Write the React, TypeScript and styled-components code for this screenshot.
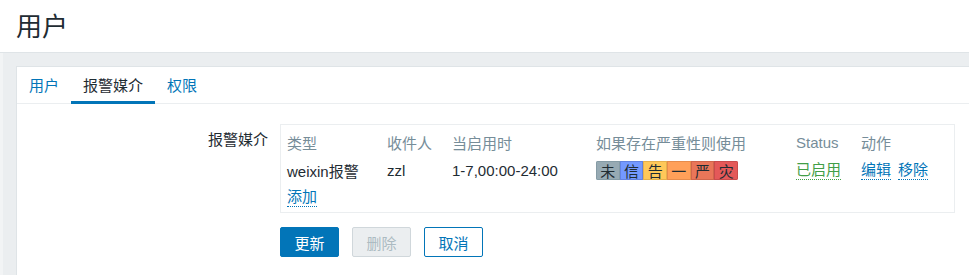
import React from "react";
import styled, { createGlobalStyle } from "styled-components";

const GlobalStyle = createGlobalStyle`
  html, body {
    margin: 0;
    padding: 0;
    background: #ebeef0;
    font-family: "Liberation Sans", Arial, "Noto Sans CJK SC", sans-serif;
    color: #1f2c33;
  }
`;

const Header = styled.header`
  height: 53px;
  background: #fff;
  border-bottom: 1px solid #dfe4e7;
  display: flex;
  align-items: center;
  padding: 0 16px;
  box-sizing: border-box;
`;

const Title = styled.h1`
  margin: 0;
  font-size: 26px;
  font-weight: normal;
  color: #1f2c33;
  line-height: 1;
  padding-top: 1px;
`;

const Wrap = styled.div`
  padding: 13px 0 0 13px;
  border-left: 3px solid #f2f4f5;
`;

const Panel = styled.section`
  background: #fff;
  border-top: 1px solid #dfe4e7;
  border-left: 1px solid #dfe4e7;
  min-height: 220px;
`;

const TabBar = styled.ul`
  display: flex;
  margin: 0;
  padding: 0;
  list-style: none;
  border-bottom: 1px solid #ebeef0;
`;

const Tab = styled.li<{ $active?: boolean }>`
  padding: 0 12px;
  height: 37px;
  line-height: 37px;
  font-size: 15px;
  color: ${(p) => (p.$active ? "#1f2c33" : "#0275b8")};
  border-bottom: 3px solid ${(p) => (p.$active ? "#0275b8" : "transparent")};
  box-sizing: border-box;
  margin-bottom: -1px;
`;

const FormRow = styled.div`
  display: flex;
  gap: 12px;
  padding-top: 20px;
`;

const Label = styled.div`
  width: 251px;
  text-align: right;
  font-size: 15px;
  padding-top: 4px;
`;

const MediaBox = styled.div`
  width: 675px;
  border: 1px solid #ebeef0;
  padding: 3px 6px 2px;
  box-sizing: border-box;
  display: grid;
  grid-template-columns: 100px 65px 144px 200px 65px 1fr;
  grid-template-rows: 28px 28px 26px;
  font-size: 15px;
  align-items: center;
`;

const Head = styled.div`
  color: #768d99;
  white-space: nowrap;
`;

const Cell = styled.div`
  white-space: nowrap;
`;

const LinkText = styled.span<{ $color?: string }>`
  color: ${(p) => p.$color || "#0275b8"};
  border-bottom: 1px dotted ${(p) => p.$color || "#0275b8"};
  line-height: 18px;
  display: inline-block;
  margin-right: 7px;
`;

const AddCell = styled.div`
  grid-column: 1 / -1;
`;

const Severity = styled.div`
  display: flex;
  width: 142px;
  height: 19px;
  border-radius: 2px;
  overflow: hidden;
`;

const Sev = styled.div<{ $bg: string; $bd: string }>`
  flex: 1;
  background: ${(p) => p.$bg};
  border: 1px solid ${(p) => p.$bd};
  display: flex;
  align-items: center;
  justify-content: center;
  font-size: 15px;
  color: #1f2c33;
  box-sizing: border-box;
`;

const Buttons = styled.div`
  display: flex;
  gap: 13px;
  padding: 14px 0 0 263px;
`;

const Button = styled.button<{ $kind: "primary" | "disabled" | "alt" }>`
  width: 59px;
  height: 30px;
  border-radius: 2px;
  font-size: 15px;
  font-family: inherit;
  padding: 0;
  cursor: pointer;
  background: ${(p) =>
    p.$kind === "primary" ? "#0275b8" : p.$kind === "disabled" ? "#ebeef0" : "#fff"};
  color: ${(p) =>
    p.$kind === "primary" ? "#fff" : p.$kind === "disabled" ? "#acbbc2" : "#0275b8"};
  border: 1px solid
    ${(p) =>
      p.$kind === "primary" ? "#0275b8" : p.$kind === "disabled" ? "#d0d7db" : "#0275b8"};
`;

const severities = [
  { t: "未", bg: "#97aab3", bd: "#859ba5" },
  { t: "信", bg: "#7499ff", bd: "#6383e0" },
  { t: "告", bg: "#ffc859", bd: "#e6b04c" },
  { t: "一", bg: "#ffa059", bd: "#e68c4c" },
  { t: "严", bg: "#e97659", bd: "#d0664c" },
  { t: "灾", bg: "#e45959", bd: "#c94c4c" },
];

export default function App() {
  return (
    <>
      <GlobalStyle />
      <Header>
        <Title>用户</Title>
      </Header>
      <Wrap>
        <Panel>
          <TabBar>
            <Tab>用户</Tab>
            <Tab $active>报警媒介</Tab>
            <Tab>权限</Tab>
          </TabBar>
          <FormRow>
            <Label>报警媒介</Label>
            <MediaBox>
              <Head>类型</Head>
              <Head>收件人</Head>
              <Head>当启用时</Head>
              <Head>如果存在严重性则使用</Head>
              <Head>Status</Head>
              <Head>动作</Head>
              <Cell>weixin报警</Cell>
              <Cell>zzl</Cell>
              <Cell>1-7,00:00-24:00</Cell>
              <Cell>
                <Severity>
                  {severities.map((s) => (
                    <Sev key={s.t} $bg={s.bg} $bd={s.bd}>
                      {s.t}
                    </Sev>
                  ))}
                </Severity>
              </Cell>
              <Cell>
                <LinkText $color="#429e47">已启用</LinkText>
              </Cell>
              <Cell>
                <LinkText>编辑</LinkText>
                <LinkText>移除</LinkText>
              </Cell>
              <AddCell>
                <LinkText>添加</LinkText>
              </AddCell>
            </MediaBox>
          </FormRow>
          <Buttons>
            <Button $kind="primary">更新</Button>
            <Button $kind="disabled" disabled>
              删除
            </Button>
            <Button $kind="alt">取消</Button>
          </Buttons>
        </Panel>
      </Wrap>
    </>
  );
}
